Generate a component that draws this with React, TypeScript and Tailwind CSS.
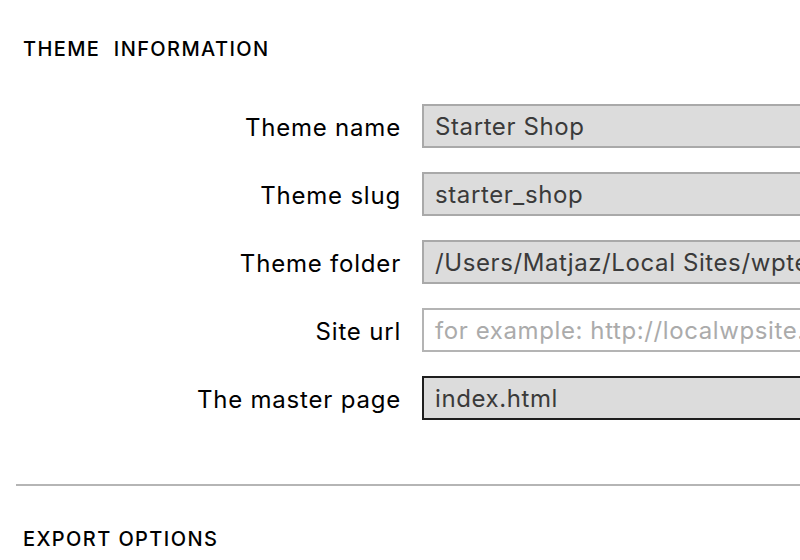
const fields = [
  { label: "Theme name", value: "Starter Shop" },
  { label: "Theme slug", value: "starter_shop" },
  { label: "Theme folder", value: "/Users/Matjaz/Local Sites/wptest/app/public/wp-content/themes/starter_shop" },
  { label: "Site url", value: "", placeholder: "for example: http://localwpsite.local" },
  { label: "The master page", value: "index.html", focused: true },
];

export default function App() {
  return (
    <div
      className="w-[800px] h-[560px] overflow-hidden bg-white text-black"
      style={{ fontFamily: "Inter, 'Noto Sans', sans-serif" }}
    >
      <div className="pl-[23px] pt-[36px] h-[26px] box-content text-[20px] leading-[26px] font-medium tracking-[1.4px] whitespace-pre">
        THEME  INFORMATION
      </div>

      <div className="mt-[42px] flex flex-col gap-[24px]">
        {fields.map((f) => (
          <div key={f.label} className="flex h-[44px]">
            <label className="w-[401px] h-[44px] flex items-center justify-end pt-[3px] text-[24px] tracking-[0.8px] shrink-0">
              {f.label}
            </label>
            <div
              className={
                "ml-[21px] w-[520px] shrink-0 h-[44px] flex items-center pl-[11px] pt-[2px] text-[24px] tracking-[0.6px] whitespace-nowrap overflow-hidden border-2 bg-[#dcdcdc] " +
                (f.focused ? "border-[#1e1e1e]" : f.value ? "border-[#a9a9a9]" : "border-[#b4b4b4] bg-white")
              }
            >
              {f.value ? (
                <span className="text-[#3a3a3a]">{f.value}</span>
              ) : (
                <span className="text-[#ababab]">{f.placeholder}</span>
              )}
            </div>
          </div>
        ))}
      </div>

      <div className="ml-[16px] mt-[64px] h-[2px] bg-[#b5b5b5]" />

      <div className="pl-[23px] mt-[40px] text-[20px] leading-[26px] font-medium tracking-[1.4px]">
        EXPORT OPTIONS
      </div>
    </div>
  );
}
